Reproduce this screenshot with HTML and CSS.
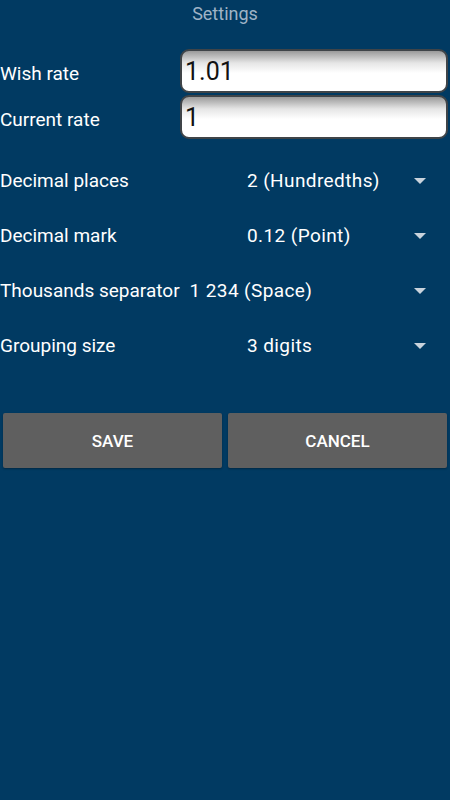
FILE: index.html
```html
<!DOCTYPE html>
<html lang="en">
<head>
    <meta charset="UTF-8">
    <meta name="viewport" content="width=device-width, initial-scale=1.0">
    <title>Settings</title>
    <link rel="stylesheet" href="styles.css">
</head>
<body>

    <div class="screen">
        <div class="title">Settings</div>

        <div class="rates">
            <div class="rate-row">
                <div class="label">Wish rate</div>
                <div class="field">1.01</div>
            </div>
            <div class="rate-row">
                <div class="label">Current rate</div>
                <div class="field">1</div>
            </div>
        </div>

        <div class="options">
            <div class="option-row">
                <div class="label opt-label">Decimal places</div>
                <div class="spinner">
                    <span class="value">2 (Hundredths)</span>
                    <span class="arrow"></span>
                </div>
            </div>
            <div class="option-row">
                <div class="label opt-label">Decimal mark</div>
                <div class="spinner">
                    <span class="value">0.12 (Point)</span>
                    <span class="arrow"></span>
                </div>
            </div>
            <div class="option-row">
                <div class="label opt-label wide">Thousands separator</div>
                <div class="spinner">
                    <span class="value">1 234 (Space)</span>
                    <span class="arrow"></span>
                </div>
            </div>
            <div class="option-row">
                <div class="label opt-label">Grouping size</div>
                <div class="spinner">
                    <span class="value">3 digits</span>
                    <span class="arrow"></span>
                </div>
            </div>
        </div>

        <div class="buttons">
            <button class="btn">SAVE</button>
            <button class="btn">CANCEL</button>
        </div>
    </div>

</body>
</html>
```

FILE: styles.css
```css
html, body {
    margin: 0;
    padding: 0;
    background-color: #013a62;
}

body {
    font-family: Roboto, "Noto Sans", sans-serif;
    width: 450px;
    height: 800px;
    overflow: hidden;
}

.screen {
    display: flex;
    flex-direction: column;
}

.title {
    text-align: center;
    color: #9fb3c6;
    font-size: 18px;
    height: 28px;
    line-height: 28px;
}

.rates {
    margin-top: 21px;
    display: flex;
    flex-direction: column;
    gap: 2px;
}

.rate-row {
    display: flex;
    align-items: center;
    height: 44px;
}

.label {
    color: #ffffff;
    font-size: 19px;
}

.rate-row .label {
    width: 180px;
    padding-top: 5px;
}

.field {
    flex: 1;
    height: 40px;
    margin-right: 2px;
    border: 2px solid #3f4448;
    border-radius: 9px;
    background: linear-gradient(#9a9a9a 0%, #e6e6e6 30%, #ffffff 55%, #ffffff 100%);
    color: #111111;
    font-size: 25px;
    line-height: 42px;
    padding-left: 3px;
}

.options {
    margin-top: 14px;
    display: flex;
    flex-direction: column;
}

.option-row {
    display: flex;
    align-items: center;
    height: 55px;
}

.opt-label {
    min-width: 237px;
}

.opt-label.wide {
    min-width: 0;
}

.spinner {
    flex: 1;
    display: flex;
    align-items: center;
    justify-content: space-between;
    padding-left: 10px;
    padding-right: 24px;
}

.value {
    color: #ffffff;
    font-size: 19px;
    letter-spacing: 0.4px;
}

.arrow {
    width: 0;
    height: 0;
    border-left: 6px solid transparent;
    border-right: 6px solid transparent;
    border-top: 6px solid #c9d3dc;
}

.buttons {
    margin-top: 40px;
    display: flex;
    gap: 6px;
    padding: 0 3px;
}

.btn {
    flex: 1;
    height: 55px;
    background-color: #5f5f5f;
    color: #ffffff;
    border: none;
    border-radius: 2px;
    font-family: Roboto, sans-serif;
    font-weight: 500;
    font-size: 17px;
    box-shadow: 0 1px 2px rgba(0, 0, 0, 0.3);
}
```
